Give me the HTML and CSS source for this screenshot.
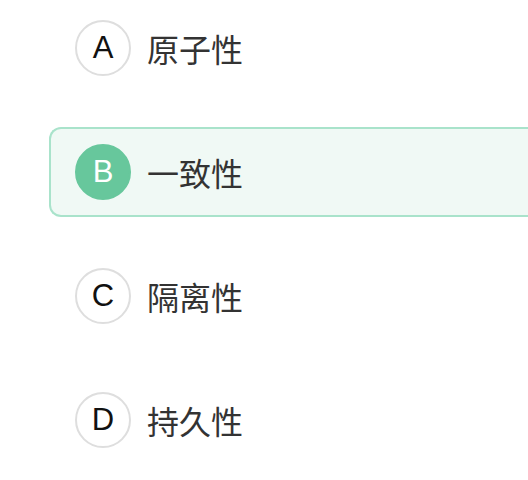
FILE: index.html
```html
<!DOCTYPE html>
<html lang="zh">
<head>
<meta charset="utf-8">
<link rel="stylesheet" href="styles.css">
</head>
<body>
<div class="options">
  <div class="option"><span class="badge">A</span><span class="label">原子性</span></div>
  <div class="option selected"><span class="badge">B</span><span class="label">一致性</span></div>
  <div class="option"><span class="badge">C</span><span class="label">隔离性</span></div>
  <div class="option"><span class="badge">D</span><span class="label">持久性</span></div>
</div>
</body>
</html>
```
FILE: styles.css
```css
html, body {
  margin: 0;
  padding: 0;
  background: #fff;
  overflow: hidden;
  width: 528px;
  height: 480px;
}
.options {
  display: flex;
  flex-direction: column;
  gap: 34px;
  margin: 3px 0 0 49px;
  width: 479px;
}
.option {
  display: flex;
  align-items: center;
  gap: 16px;
  height: 90px;
  box-sizing: border-box;
  padding-left: 24px;
  border: 2px solid transparent;
  border-right: 0;
  border-radius: 12px 0 0 12px;
}
.option.selected {
  border-color: #a9e3cb;
  background: #f0f9f5;
}
.badge {
  width: 56px;
  height: 56px;
  box-sizing: border-box;
  border: 2px solid #dedede;
  border-radius: 50%;
  display: flex;
  align-items: center;
  justify-content: center;
  font-family: "Liberation Sans", Arial, sans-serif;
  font-size: 31px;
  color: #111;
  background: #fff;
}
.selected .badge {
  background: #67c79c;
  border-color: #67c79c;
  color: #fff;
}
.label {
  font-family: "Noto Sans CJK SC", "Noto Sans", sans-serif;
  font-size: 32px;
  color: #333;
  line-height: 1;
}
```
